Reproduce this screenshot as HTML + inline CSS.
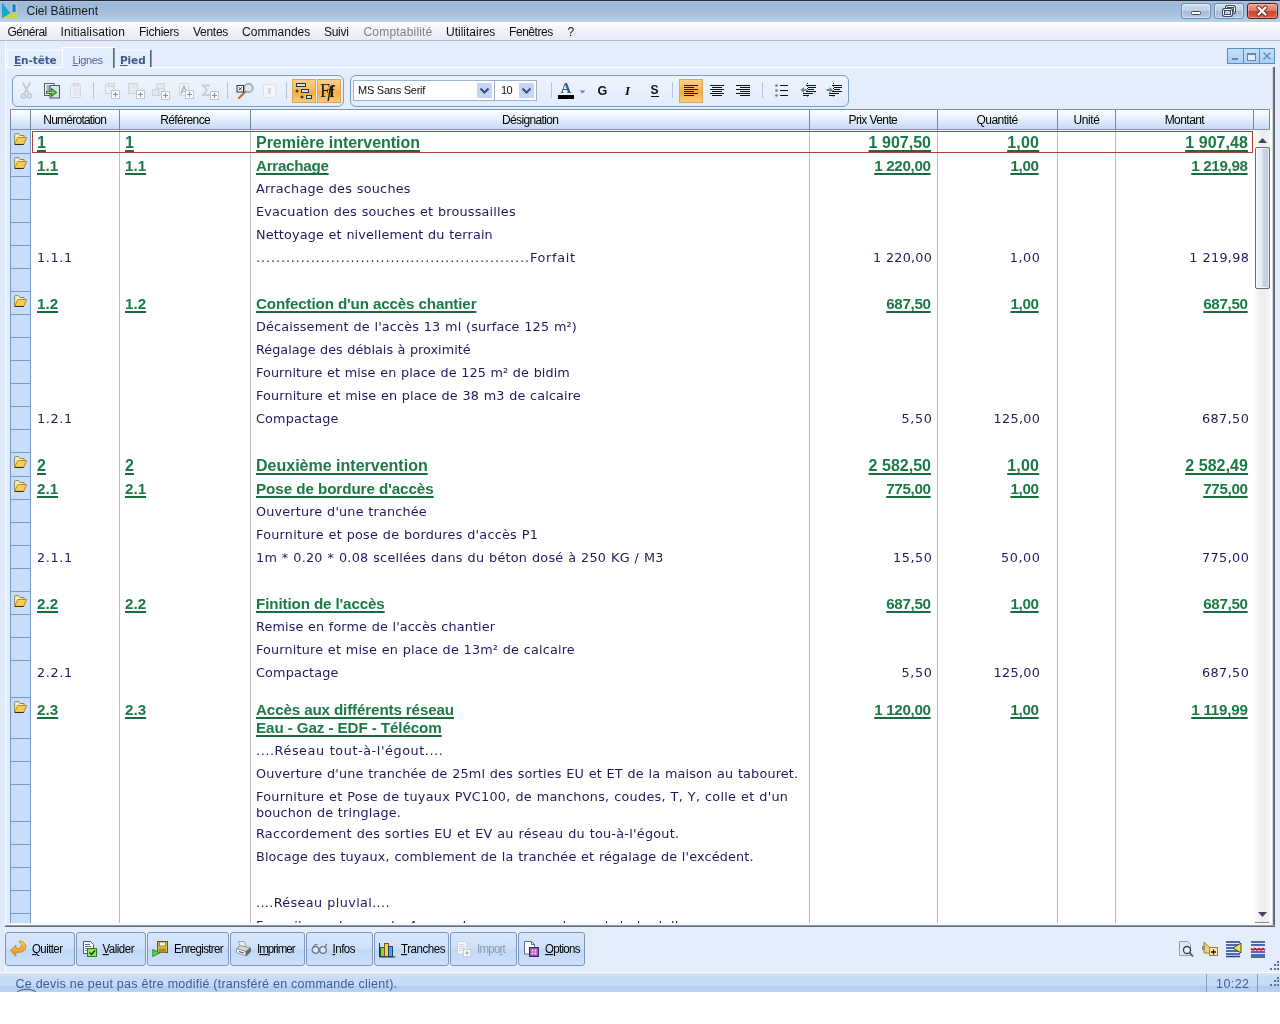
<!DOCTYPE html>
<html lang="fr">
<head>
<meta charset="utf-8">
<title>Ciel Bâtiment</title>
<style>
html,body{margin:0;padding:0;}
body{width:1280px;height:1024px;position:relative;overflow:hidden;background:#fff;font-family:"Liberation Sans",sans-serif;font-size:12px;color:#000;}
div,span,i,b,u{box-sizing:border-box;}
.abs{position:absolute;}
#app{position:absolute;left:0;top:0;width:1280px;height:1024px;will-change:transform;}
/* ---------- title bar ---------- */
#title{position:absolute;left:0;top:0;width:1280px;height:22px;background:linear-gradient(#b4c3d9 0,#9eb8d9 10%,#a3bddc 50%,#b8d0ea 100%);border-top:1px solid #1f2c42;}
#title .cap{position:absolute;left:26.500px;top:3px;font-size:12px;color:#1a1a1a;}
#title .wb{position:absolute;top:2px;height:16px;width:30px;border:1px solid #6e8bb0;border-radius:3px;background:linear-gradient(#d2deec 0,#bfcfe3 48%,#a4bad4 52%,#b7cae0 100%);box-shadow:inset 0 0 0 1px rgba(255,255,255,.45);}
#title .wb.cl{border-color:#5a1c14;background:linear-gradient(#eba38f 0,#dd7a62 48%,#c8432a 52%,#d9684c 100%);box-shadow:inset 0 0 0 1px rgba(255,255,255,.3);width:31px}
/* ---------- menu ---------- */
#menu{position:absolute;left:0;top:22px;width:1280px;height:19px;background:linear-gradient(#ffffff 0,#f1f2fa 45%,#e7e9f5 100%);border-bottom:1px solid #b5bbc8;}
#menu span{position:absolute;top:3px;font-size:12px;color:#111;white-space:nowrap;}
#menu span.dis{color:#7d8086;}
/* ---------- work area ---------- */
#work{position:absolute;left:0;top:41px;width:1280px;height:932px;background:#e3edfc;}
#lframe{position:absolute;left:0;top:41px;width:5px;height:932px;background:#dfeafb;}
/* tabs */
.tab{position:absolute;font-size:12px;white-space:nowrap;color:#3f5c8c;}
.tab.tb{font-family:"DejaVu Sans","Liberation Sans",sans-serif;font-weight:bold;font-size:10.500px;letter-spacing:-0.1px;}
/* toolbar */
.tg{position:absolute;top:75px;height:32px;border:1px solid #7a9cc6;border-radius:6px;background:linear-gradient(#edf4fd,#e1ecfb);}
.sep{position:absolute;top:82px;width:1px;height:18px;background:#b5c6dc;}
.act{position:absolute;top:79px;height:24px;border:1px solid #d9a757;background:linear-gradient(#fbd08a 0,#f9b85c 45%,#f7a93e 55%,#fbcb7c 100%);}
/* grid */
#grid{position:absolute;left:10px;top:109px;width:1260px;height:814px;background:#fff;overflow:hidden;}
#ghead{position:absolute;left:0;top:0;width:1260px;height:21px;background:linear-gradient(#fdfeff 0,#eaf2fd 40%,#d2e2f8 75%,#c6daf5 100%);border-top:1px solid #7e93ad;border-bottom:1px solid #8497b0;}
#ghead span{position:absolute;top:3px;font-size:12px;line-height:14px;color:#000;white-space:nowrap;}
#ghead i{position:absolute;top:0;width:1px;height:19px;background:#7389a5;}
#gut{position:absolute;left:0;top:0;width:21px;height:814px;background:#c8ddfa;border-left:1px solid #7799c4;border-right:1px solid #7799c4;}
.gl{position:absolute;left:1px;width:19px;height:1px;background:#7799c4;}
.vl{position:absolute;top:21px;width:1px;height:800px;background:#b6c0cc;}
.r{position:absolute;left:0;width:1260px;}
.r span{position:absolute;white-space:nowrap;}
.r u{text-decoration:none;}
.r em{font-style:normal;}
.t span{font-family:"DejaVu Sans","Liberation Sans",sans-serif;font-size:12.8px;color:#1c1c5e;top:5px;line-height:16px;word-spacing:0.45px;}
.h1 span{font-weight:bold;font-size:16px;color:#1b7a45;top:4px;line-height:18px;}
.h2 span{font-weight:bold;font-size:15.2px;color:#1b7a45;top:4px;line-height:18px;}
.h1 u,.h2 u{text-decoration:underline;text-decoration-thickness:2px;text-underline-offset:2px;text-decoration-skip-ink:none;text-decoration-color:#1b6a40;}
.c1{left:27px;}
.c2{left:115px;}
.c3{left:246px;}
.c4{right:339px;}
.c5{right:231px;}
.c6{right:22px;}
.t .c4{right:338.200px;}.t .c5{right:230.200px;}.t .c6{right:21.200px;}
.fi{position:absolute;left:4px;top:3px;width:13px;height:12px;}
.h2 .fi{top:4px;}
.fold{display:block;}
#sel{position:absolute;left:22px;top:22px;width:1221px;height:22px;border:1px solid #a9443c;}
/* scrollbar */
#sb{position:absolute;left:1244px;top:21px;width:16px;height:793px;background:linear-gradient(to right,#fff 0,#f3f3f4 25%,#ededee 55%,#f3f3f4 100%);}
/* bottom */
#bline{position:absolute;left:5px;top:925px;width:1270px;height:2px;background:linear-gradient(#9aa1ab 0,#9aa1ab 50%,#5f6874 50%,#5f6874 100%);}
.bb{position:absolute;top:932px;height:34px;border:1px solid #7d97bb;border-radius:3px;background:linear-gradient(#d8e6fb 0,#cfe0fa 48%,#c1d8f8 52%,#cde0fb 100%);font-size:12px;white-space:nowrap;}
.bb span{position:absolute;top:8.500px;color:#000;font-size:11.500px;line-height:14px;transform:scaleY(1.07);transform-origin:0 78%;}
.bb.dis span{color:#8f9bab;}
#status{position:absolute;left:0;top:973px;width:1280px;height:19px;background:linear-gradient(#dbe5f4 0,#c9dcf6 22%,#c4dbfb 66%,#b4cdec 71%,#bcd4f1 100%);}
#status span{position:absolute;top:2px;font-size:13px;color:#3d5d8f;white-space:nowrap;}
</style>
</head>
<body>
<div id="app">
<div id="title">
  <svg class="abs" style="left:0;top:-1px" width="20" height="22" viewBox="0 0 20 22"><defs><linearGradient id="ti" x1="0" x2="0" y1="0" y2="1"><stop offset="0" stop-color="#1b9fd8"/><stop offset=".7" stop-color="#14aacb"/><stop offset="1" stop-color="#2aa58a"/></linearGradient></defs><path d="M4 17.800 L10 13.200 L17.500 13 L17.500 18.200 L4 18.200z" fill="#c5d940"/><path d="M2 2.500 L2 18.200 L10.500 13.200z" fill="url(#ti)"/><rect x="12" y="3.800" width="4" height="8.700" rx="1.200" fill="#1b7ec3" stroke="#cfe8f8" stroke-width=".7"/><circle cx="13.800" cy="15.400" r="1.700" fill="#e6e24e" stroke="#b9b632" stroke-width=".6"/></svg>
  <span class="cap" style="letter-spacing:0.01px">Ciel Bâtiment</span>
  <div class="wb" style="left:1181px"><svg width="28" height="14" viewBox="0 0 28 14"><rect x="9.5" y="7.5" width="9" height="3" rx="1" fill="#fff" stroke="#3c4a5e"/></svg></div>
  <div class="wb" style="left:1214px"><svg width="28" height="14" viewBox="0 0 28 14"><rect x="11.5" y="2.500" width="8" height="6" rx="1" fill="none" stroke="#3c4a5e" stroke-width="3"/><rect x="11.500" y="2.500" width="8" height="6" rx="1" fill="none" stroke="#fff"/><rect x="8.500" y="5.500" width="8" height="6" rx="1" fill="#c3d3e6" stroke="#3c4a5e" stroke-width="3"/><rect x="8.500" y="5.500" width="8" height="6" rx="1" fill="none" stroke="#fff"/></svg></div>
  <div class="wb cl" style="left:1247px"><svg width="29" height="14" viewBox="0 0 29 14"><path d="M10.500 3.500 L17.500 10.500 M17.500 3.500 L10.500 10.500" stroke="#6a2a20" stroke-width="4.200" stroke-linecap="round"/><path d="M10.500 3.500 L17.500 10.500 M17.500 3.500 L10.500 10.500" stroke="#fff" stroke-width="2.400" stroke-linecap="round"/></svg></div>
</div>
<div id="menu">
  <span style="left:7.5px;letter-spacing:-0.484px">Général</span>
  <span style="left:60.5px;letter-spacing:0.123px">Initialisation</span>
  <span style="left:139px;letter-spacing:-0.245px">Fichiers</span>
  <span style="left:193px;letter-spacing:-0.281px">Ventes</span>
  <span style="left:242px;letter-spacing:0.034px">Commandes</span>
  <span style="left:324px;letter-spacing:-0.304px">Suivi</span>
  <span class="dis" style="left:363.5px;letter-spacing:0.191px">Comptabilité</span>
  <span style="left:446px;letter-spacing:-0.004px">Utilitaires</span>
  <span style="left:509px;letter-spacing:-0.437px">Fenêtres</span>
  <span style="left:567.5px">?</span>
</div>
<div id="work"></div>
<div id="lframe"></div>
<div class="abs" style="left:5px;top:41px;width:1px;height:932px;background:#f8fbff"></div>

<!-- tab strip -->
<div class="abs" style="left:6px;top:67px;width:1268px;height:1px;background:#fbfdff"></div>
<div class="abs" style="left:1270px;top:109px;width:3px;height:816px;background:#fff"></div>
<div class="abs" style="left:10px;top:923px;width:1263px;height:2px;background:#f4f8fd"></div>
<div class="abs" style="left:1272px;top:67px;width:1px;height:858px;background:#d3d7dd"></div>
<div class="abs" style="left:1273px;top:67px;width:1px;height:859px;background:#737986"></div>
<div class="abs" style="left:1274px;top:67px;width:1px;height:860px;background:#5b616d"></div>
<div class="abs" style="left:7px;top:50px;width:55px;height:17px;border-left:1px solid #f5f9ff;border-top:1px solid #f5f9ff"></div>
<div class="abs" style="left:62px;top:47px;width:52px;height:21px;border-left:1px solid #fbfdff;border-top:1px solid #fbfdff;background:#e3edfc"></div>
<div class="abs" style="left:113px;top:48px;width:1px;height:20px;background:#5d636d"></div><div class="abs" style="left:114px;top:48px;width:1px;height:20px;background:#8e959f"></div>
<div class="abs" style="left:150px;top:50px;width:1px;height:17px;background:#5d636d"></div><div class="abs" style="left:151px;top:50px;width:1px;height:17px;background:#8e959f"></div>
<div class="abs" style="left:115px;top:50px;width:35px;height:1px;background:#f5f9ff"></div>
<span class="tab tb" style="left:14px;top:54px"><u>E</u>n-tête</span>
<span class="tab" style="left:72.500px;top:54px;color:#4d6a98;font-size:11px;letter-spacing:-0.4px"><u>L</u>ignes</span>
<span class="tab tb" style="left:120px;top:54px"><u>P</u>ied</span>
<!-- mdi buttons -->
<div class="abs" style="left:1227px;top:48px;width:48px;height:16px;background:linear-gradient(#c2e1fb,#abd0f5);border:1px solid #5a8db8"></div>
<div class="abs" style="left:1243px;top:48px;width:1px;height:16px;background:#5a8db8"></div>
<div class="abs" style="left:1259px;top:48px;width:1px;height:16px;background:#5a8db8"></div>
<svg class="abs" style="left:1227px;top:48px" width="48" height="16" viewBox="0 0 48 16"><rect x="5" y="10" width="6" height="2" fill="#6585ad"/><rect x="20.500" y="5.500" width="8" height="7" fill="#e3edfc" stroke="#6585ad"/><rect x="20" y="5" width="9" height="2" fill="#6585ad"/><path d="M36.500 4.500 L43.500 11.500 M43.500 4.500 L36.500 11.500" stroke="#6585ad" stroke-width="1.200"/></svg>

<!-- toolbar -->
<div class="tg" style="left:12px;width:332px"></div>
<div class="tg" style="left:350px;width:499px"></div>
<!-- group 1 icons -->
<svg class="abs" style="left:12px;top:75px" width="332" height="32" viewBox="12 75 332 32">
  <!-- scissors (disabled) -->
  <g stroke="#c4c9d1" stroke-width="1.600" fill="none" stroke-linecap="round"><path d="M23 83 L29 94 M30 83 L24 94"/><circle cx="23.500" cy="96" r="2"/><circle cx="29.500" cy="96" r="2"/></g>
  <!-- copy / import -->
  <g><rect x="44.500" y="83.500" width="9.500" height="12" fill="#f4f9fd" stroke="#4c6078"/><path d="M46.500 86h5M46.500 88h4M46.500 90h4" stroke="#55687f" stroke-width="1"/><rect x="50" y="85.500" width="9.500" height="12.500" fill="#d2e6ec" stroke="#46536c"/><path d="M46.300 91.400 h5.200 v-2.900 l5.400 4 l-5.400 4 v-2.900 h-5.200z" fill="#5cc832" stroke="#1f6a10" stroke-width=".9" stroke-linejoin="round"/><path d="M47 92.300h6" stroke="#b6f09a" stroke-width=".8"/></g>
  <!-- paste (disabled) -->
  <g stroke="#d2d6dc" fill="#eef1f5"><rect x="70.500" y="84.500" width="10" height="13" rx="1"/><rect x="73.500" y="83.500" width="5" height="2.500" fill="#e2e5ea"/><path d="M73 89h7M73 91h7M73 93h7M73 95h7" stroke="#dadde3"/></g>
  <path d="M93.500 82v17" stroke="#b9c5d6"/>
  <!-- 4 -->
  <g stroke="#d2d5db" fill="#eceff3"><rect x="105.500" y="84.500" width="8" height="9"/><rect x="108.500" y="83.500" width="6" height="3" fill="#e3e6eb"/></g>
  <g><rect x="111.500" y="90.500" width="8" height="8" fill="#fafbfc" stroke="#c3c8d0"/><path d="M113 94.500h5M115.500 92v5" stroke="#8c9198" stroke-width="1"/></g>
  <!-- 5 -->
  <rect x="128.500" y="83.500" width="9" height="10" fill="#e6e9ee" stroke="#d3d7dd"/>
  <g><rect x="136.500" y="90.500" width="8" height="8" fill="#fafbfc" stroke="#c3c8d0"/><path d="M138 94.500h5M140.500 92v5" stroke="#8c9198" stroke-width="1"/></g>
  <!-- 6 -->
  <g fill="#e4e7ec" stroke="#d0d4db"><rect x="156.500" y="83.500" width="8" height="7"/><rect x="152.500" y="89.500" width="7" height="6"/><rect x="158.500" y="88.500" width="5" height="6"/></g>
  <g><rect x="161.500" y="91.500" width="8" height="8" fill="#fafbfc" stroke="#c3c8d0"/><path d="M163 95.500h5M165.500 93v5" stroke="#8c9198" stroke-width="1"/></g>
  <!-- 7 -->
  <rect x="179.500" y="83.500" width="9" height="12" fill="#f2f4f7" stroke="#d6d9df"/>
  <path d="M181 94 L184 86 L187 94 M182 91.500h4" stroke="#a9aeb6" stroke-width="1.200" fill="none"/>
  <g><rect x="185.500" y="90.500" width="8" height="8" fill="#fafbfc" stroke="#c3c8d0"/><path d="M187 94.500h5M189.500 92v5" stroke="#8c9198" stroke-width="1"/></g>
  <!-- 8 -->
  <path d="M210 85.500h-7l4 4.500l-4 5h7" stroke="#c9cdd4" stroke-width="1.800" fill="none"/>
  <g><rect x="210.500" y="91.500" width="8" height="8" fill="#fafbfc" stroke="#c3c8d0"/><path d="M212 95.500h5M214.500 93v5" stroke="#8c9198" stroke-width="1"/></g>
  <path d="M227.500 82v17" stroke="#b9c5d6"/>
  <!-- magnifier -->
  <g><path d="M239 98 L246 91" stroke="#b5773a" stroke-width="2.200" stroke-linecap="round"/><circle cx="248.500" cy="88" r="4.300" fill="#dfe9f2" stroke="#8ea0b3" stroke-width="1.400"/><rect x="237" y="85.500" width="6.500" height="6.500" fill="#fff" stroke="#333" stroke-width="1"/><path d="M238.800 87.200l3 3m0 -3l-3 3" stroke="#222" stroke-width=".9"/></g>
  <!-- disabled -->
  <rect x="263.500" y="84.500" width="12" height="13" rx="1" fill="#f3f5f8" stroke="#dfe2e7"/><rect x="268" y="88" width="3" height="6" fill="#d5d9df"/>
  <path d="M286.500 82v17" stroke="#b9c5d6"/>
</svg>
<div class="act" style="left:292px;width:24px"></div>
<div class="act" style="left:317px;width:24px"></div>
<svg class="abs" style="left:292px;top:79px" width="50" height="24" viewBox="292 79 50 24">
  <g fill="#cfe3f7" stroke="#1d3557" stroke-width="1"><rect x="296.500" y="83.500" width="9" height="3"/><rect x="301.500" y="89.500" width="7" height="3"/><rect x="306.500" y="95.500" width="5" height="3"/></g>
  <path d="M295.500 91h3M297 89.500v3M300.500 97h3M302 95.500v3" stroke="#111" stroke-width="1"/>
</svg>
<span class="abs" style="left:320px;top:80px;font-family:'Liberation Serif',serif;font-size:18px;line-height:22px;color:#1a1a1a;letter-spacing:-2.800px;white-space:nowrap">F<i style="font-size:17px">f</i><b style="font-size:17px">f</b></span>

<!-- group 2 -->
<div class="abs" style="left:353px;top:80px;width:142px;height:21px;background:#fff;border:1px solid #9db2cd"></div>
<div class="abs" style="left:494px;top:80px;width:43px;height:21px;background:#fff;border:1px solid #9db2cd"></div>
<span class="abs" style="left:358px;top:84px;font-size:11px;line-height:13px;color:#111;white-space:nowrap;letter-spacing:-0.25px">MS Sans Serif</span>
<span class="abs" style="left:501px;top:84px;font-size:11px;line-height:13px;color:#111;white-space:nowrap;letter-spacing:-0.6px">10</span>
<div class="abs" style="left:477px;top:83px;width:15px;height:15px;background:#c4d6f1;border-radius:1px"></div>
<div class="abs" style="left:519px;top:83px;width:15px;height:15px;background:#c4d6f1;border-radius:1px"></div>
<svg class="abs" style="left:477px;top:83px" width="60" height="15" viewBox="477 83 60 15"><path d="M480.500 88.500 L484.500 92.500 L488.500 88.500 M522.500 88.500 L526.500 92.500 L530.500 88.500" stroke="#384e8a" stroke-width="2" fill="none"/></svg>
<svg class="abs" style="left:545px;top:79px" width="304" height="24" viewBox="545 79 304 24">
  <path d="M551.500 82v16" stroke="#b9c5d6"/>
  <rect x="558" y="95" width="16" height="4" fill="#000"/>
  <path d="M579.500 90.500h6l-3 3z" fill="#6d86ab"/>
  <path d="M672.500 82v16" stroke="#b9c5d6"/>
  <rect x="679.500" y="79.500" width="23" height="23" fill="url(#og)" stroke="#d8a85c"/>
  <defs><linearGradient id="og" x1="0" x2="0" y1="0" y2="1"><stop offset="0" stop-color="#fbcf8a"/><stop offset=".45" stop-color="#f8b557"/><stop offset=".55" stop-color="#f7a83e"/><stop offset="1" stop-color="#fccf7e"/></linearGradient></defs>
  <path d="M684 85.500h14M684 87.500h10M684 89.500h14M684 91.500h10M684 93.500h14M684 95.500h10" stroke="#2a1408" stroke-width="1"/>
  <path d="M710 85.500h14M712 87.500h10M710 89.500h14M712 91.500h10M710 93.500h14M712 95.500h10" stroke="#111" stroke-width="1"/>
  <path d="M736 85.500h14M740 87.500h10M736 89.500h14M740 91.500h10M736 93.500h14M740 95.500h10" stroke="#111" stroke-width="1"/>
  <path d="M762.500 82v16" stroke="#b9c5d6"/>
  <g fill="#5f7fa8"><circle cx="776.500" cy="85.500" r="1.300"/><circle cx="776.500" cy="90.500" r="1.300"/><circle cx="776.500" cy="95.500" r="1.300"/></g>
  <path d="M780 85.500h8M780 90.500h8M780 95.500h8" stroke="#111" stroke-width="1"/>
  <!-- outdent -->
  <path d="M806 85.500h10M808 87.500h8M808 89.500h6M806 91.500h10M803 93.500h10M803 95.500h6" stroke="#111" stroke-width="1.200"/>
  <path d="M807.500 83v14" stroke="#111" stroke-width="1" stroke-dasharray="1 1.500"/>
  <path d="M800.500 90 l3.500 -3 v2h3v2h-3v2z" fill="#6d86ab"/>
  <!-- indent -->
  <path d="M832 85.500h10M834 87.500h8M834 89.500h6M832 91.500h10M829 93.500h10M829 95.500h6" stroke="#111" stroke-width="1.200"/>
  <path d="M833.500 83v14" stroke="#111" stroke-width="1" stroke-dasharray="1 1.500"/>
  <path d="M833 90 l-3.500 -3 v2h-3v2h3v2z" fill="#6d86ab"/>
</svg>
<span class="abs" style="left:559px;top:80px;width:14px;text-align:center;font-family:'Liberation Serif',serif;font-weight:bold;font-size:15px;line-height:16px;color:#3a5a8d">A</span>
<span class="abs" style="left:597.500px;top:84px;font-weight:bold;font-size:12.500px;line-height:14px;color:#111">G</span>
<span class="abs" style="left:625px;top:83px;font-family:'Liberation Serif',serif;font-weight:bold;font-style:italic;font-size:13px;line-height:15px;color:#111">I</span>
<span class="abs" style="left:650.500px;top:83px;font-weight:bold;font-size:12px;line-height:14px;color:#111;border-bottom:1px solid #111;height:14px">S</span>


<!-- grid -->
<div id="grid">
  <div id="gut"></div>
  <b class="gl" style="top:44px"></b>
<b class="gl" style="top:67px"></b>
<b class="gl" style="top:90px"></b>
<b class="gl" style="top:113px"></b>
<b class="gl" style="top:136px"></b>
<b class="gl" style="top:159px"></b>
<b class="gl" style="top:182px"></b>
<b class="gl" style="top:205px"></b>
<b class="gl" style="top:228px"></b>
<b class="gl" style="top:251px"></b>
<b class="gl" style="top:274px"></b>
<b class="gl" style="top:297px"></b>
<b class="gl" style="top:320px"></b>
<b class="gl" style="top:343px"></b>
<b class="gl" style="top:367px"></b>
<b class="gl" style="top:390px"></b>
<b class="gl" style="top:413px"></b>
<b class="gl" style="top:436px"></b>
<b class="gl" style="top:459px"></b>
<b class="gl" style="top:482px"></b>
<b class="gl" style="top:505px"></b>
<b class="gl" style="top:528px"></b>
<b class="gl" style="top:551px"></b>
<b class="gl" style="top:588px"></b>
<b class="gl" style="top:629px"></b>
<b class="gl" style="top:652px"></b>
<b class="gl" style="top:675px"></b>
<b class="gl" style="top:712px"></b>
<b class="gl" style="top:735px"></b>
<b class="gl" style="top:758px"></b>
<b class="gl" style="top:781px"></b>
<b class="gl" style="top:804px"></b>
  <i class="vl" style="left:109px"></i>
  <i class="vl" style="left:240px"></i>
  <i class="vl" style="left:799px"></i>
  <i class="vl" style="left:927px"></i>
  <i class="vl" style="left:1047px"></i>
  <i class="vl" style="left:1105px"></i>
<div class="r h1" style="top:21px;height:23px">
<i class="fi"><svg class="fold" viewBox="0 0 13 12" width="13" height="12"><path d="M0.600 11.300V1.200q0-.6.600-.6h3.200l1.600 1.900h4v2.200" fill="#f6f1b4" stroke="#8e8466" stroke-width="1" stroke-linejoin="round"/><path d="M0.700 11.400l2.900-6.900h9l-2.900 6.900z" fill="#f7cd49" stroke="#9a7a2c" stroke-width=".8" stroke-linejoin="round"/><path d="M0.800 11.500h8.900" stroke="#3a2a12" stroke-width="1"/></svg></i>
<span class="c1"><u>1</u></span>
<span class="c2"><u>1</u></span>
<span class="c3"><u style="letter-spacing:-0.025px">Première intervention</u></span>
<span class="c4"><u style="letter-spacing:0.017px;margin-right:-0.017px">1 907,50</u></span>
<span class="c5"><u style="letter-spacing:0.22px;margin-right:-0.22px">1,00</u></span>
<span class="c6"><u style="letter-spacing:0.074px;margin-right:-0.074px">1 907,48</u></span>
</div>
<div class="r h2" style="top:44px;height:23px">
<i class="fi"><svg class="fold" viewBox="0 0 13 12" width="13" height="12"><path d="M0.600 11.300V1.200q0-.6.600-.6h3.200l1.600 1.900h4v2.200" fill="#f6f1b4" stroke="#8e8466" stroke-width="1" stroke-linejoin="round"/><path d="M0.700 11.400l2.900-6.900h9l-2.900 6.900z" fill="#f7cd49" stroke="#9a7a2c" stroke-width=".8" stroke-linejoin="round"/><path d="M0.800 11.500h8.900" stroke="#3a2a12" stroke-width="1"/></svg></i>
<span class="c1"><u>1.1</u></span>
<span class="c2"><u>1.1</u></span>
<span class="c3"><u style="letter-spacing:-0.28px">Arrachage</u></span>
<span class="c4"><u style="letter-spacing:-0.332px;margin-right:0.332px">1 220,00</u></span>
<span class="c5"><u style="letter-spacing:-0.321px;margin-right:0.321px">1,00</u></span>
<span class="c6"><u style="letter-spacing:-0.332px;margin-right:0.332px">1 219,98</u></span>
</div>
<div class="r t" style="top:67px;height:23px">
<span class="c3"><em style="letter-spacing:0.231px">Arrachage des souches</em></span>
</div>
<div class="r t" style="top:90px;height:23px">
<span class="c3"><em style="letter-spacing:0.196px">Evacuation des souches et broussailles</em></span>
</div>
<div class="r t" style="top:113px;height:23px">
<span class="c3"><em style="letter-spacing:0.133px">Nettoyage et nivellement du terrain</em></span>
</div>
<div class="r t" style="top:136px;height:23px">
<span class="c1"><em style="letter-spacing:0.659px">1.1.1</em></span>
<span class="c3"><em style="letter-spacing:0.912px">.......................................................</em><em style="letter-spacing:0.696px">Forfait</em></span>
<span class="c4"><em style="letter-spacing:0.209px;margin-right:-0.209px">1 220,00</em></span>
<span class="c5"><em style="letter-spacing:0.5px;margin-right:-0.5px">1,00</em></span>
<span class="c6"><em style="letter-spacing:0.295px;margin-right:-0.295px">1 219,98</em></span>
</div>
<div class="r t" style="top:159px;height:23px">
</div>
<div class="r h2" style="top:182px;height:23px">
<i class="fi"><svg class="fold" viewBox="0 0 13 12" width="13" height="12"><path d="M0.600 11.300V1.200q0-.6.600-.6h3.200l1.600 1.900h4v2.200" fill="#f6f1b4" stroke="#8e8466" stroke-width="1" stroke-linejoin="round"/><path d="M0.700 11.400l2.900-6.900h9l-2.900 6.900z" fill="#f7cd49" stroke="#9a7a2c" stroke-width=".8" stroke-linejoin="round"/><path d="M0.800 11.500h8.900" stroke="#3a2a12" stroke-width="1"/></svg></i>
<span class="c1"><u>1.2</u></span>
<span class="c2"><u>1.2</u></span>
<span class="c3"><u style="letter-spacing:-0.143px">Confection d'un accès chantier</u></span>
<span class="c4"><u style="letter-spacing:-0.331px;margin-right:0.331px">687,50</u></span>
<span class="c5"><u style="letter-spacing:-0.321px;margin-right:0.321px">1,00</u></span>
<span class="c6"><u style="letter-spacing:-0.331px;margin-right:0.331px">687,50</u></span>
</div>
<div class="r t" style="top:205px;height:23px">
<span class="c3"><em style="letter-spacing:0.16px">Décaissement de l'accès 13 ml (surface 125 m²)</em></span>
</div>
<div class="r t" style="top:228px;height:23px">
<span class="c3"><em style="letter-spacing:0.005px">Régalage des déblais à proximité</em></span>
</div>
<div class="r t" style="top:251px;height:23px">
<span class="c3"><em style="letter-spacing:0.087px">Fourniture et mise en place de 125 m² de bidim</em></span>
</div>
<div class="r t" style="top:274px;height:23px">
<span class="c3"><em style="letter-spacing:0.129px">Fourniture et mise en place de 38 m3 de calcaire</em></span>
</div>
<div class="r t" style="top:297px;height:23px">
<span class="c1"><em style="letter-spacing:0.659px">1.2.1</em></span>
<span class="c3"><em style="letter-spacing:0.145px">Compactage</em></span>
<span class="c4"><em style="letter-spacing:0.6px;margin-right:-0.6px">5,50</em></span>
<span class="c5"><em style="letter-spacing:0.284px;margin-right:-0.284px">125,00</em></span>
<span class="c6"><em style="letter-spacing:0.404px;margin-right:-0.404px">687,50</em></span>
</div>
<div class="r t" style="top:320px;height:23px">
</div>
<div class="r h1" style="top:344px;height:23px">
<i class="fi"><svg class="fold" viewBox="0 0 13 12" width="13" height="12"><path d="M0.600 11.300V1.200q0-.6.600-.6h3.200l1.600 1.900h4v2.200" fill="#f6f1b4" stroke="#8e8466" stroke-width="1" stroke-linejoin="round"/><path d="M0.700 11.400l2.900-6.900h9l-2.900 6.900z" fill="#f7cd49" stroke="#9a7a2c" stroke-width=".8" stroke-linejoin="round"/><path d="M0.800 11.500h8.900" stroke="#3a2a12" stroke-width="1"/></svg></i>
<span class="c1"><u>2</u></span>
<span class="c2"><u>2</u></span>
<span class="c3"><u style="letter-spacing:0.005px">Deuxième intervention</u></span>
<span class="c4"><u style="letter-spacing:0.017px;margin-right:-0.017px">2 582,50</u></span>
<span class="c5"><u style="letter-spacing:0.22px;margin-right:-0.22px">1,00</u></span>
<span class="c6"><u style="letter-spacing:0.074px;margin-right:-0.074px">2 582,49</u></span>
</div>
<div class="r h2" style="top:367px;height:23px">
<i class="fi"><svg class="fold" viewBox="0 0 13 12" width="13" height="12"><path d="M0.600 11.300V1.200q0-.6.600-.6h3.200l1.600 1.900h4v2.200" fill="#f6f1b4" stroke="#8e8466" stroke-width="1" stroke-linejoin="round"/><path d="M0.700 11.400l2.900-6.900h9l-2.900 6.900z" fill="#f7cd49" stroke="#9a7a2c" stroke-width=".8" stroke-linejoin="round"/><path d="M0.800 11.500h8.900" stroke="#3a2a12" stroke-width="1"/></svg></i>
<span class="c1"><u>2.1</u></span>
<span class="c2"><u>2.1</u></span>
<span class="c3"><u style="letter-spacing:-0.068px">Pose de bordure d'accès</u></span>
<span class="c4"><u style="letter-spacing:-0.331px;margin-right:0.331px">775,00</u></span>
<span class="c5"><u style="letter-spacing:-0.321px;margin-right:0.321px">1,00</u></span>
<span class="c6"><u style="letter-spacing:-0.331px;margin-right:0.331px">775,00</u></span>
</div>
<div class="r t" style="top:390px;height:23px">
<span class="c3"><em style="letter-spacing:0.17px">Ouverture d'une tranchée</em></span>
</div>
<div class="r t" style="top:413px;height:23px">
<span class="c3"><em style="letter-spacing:0.227px">Fourniture et pose de bordures d'accès P1</em></span>
</div>
<div class="r t" style="top:436px;height:23px">
<span class="c1"><em style="letter-spacing:0.659px">2.1.1</em></span>
<span class="c3"><em style="letter-spacing:0.247px">1m * 0.20 * 0.08 scellées dans du béton dosé à 250 KG / M3</em></span>
<span class="c4"><em style="letter-spacing:0.515px;margin-right:-0.515px">15,50</em></span>
<span class="c5"><em style="letter-spacing:0.515px;margin-right:-0.515px">50,00</em></span>
<span class="c6"><em style="letter-spacing:0.404px;margin-right:-0.404px">775,00</em></span>
</div>
<div class="r t" style="top:459px;height:23px">
</div>
<div class="r h2" style="top:482px;height:23px">
<i class="fi"><svg class="fold" viewBox="0 0 13 12" width="13" height="12"><path d="M0.600 11.300V1.200q0-.6.600-.6h3.200l1.600 1.900h4v2.200" fill="#f6f1b4" stroke="#8e8466" stroke-width="1" stroke-linejoin="round"/><path d="M0.700 11.400l2.900-6.900h9l-2.900 6.900z" fill="#f7cd49" stroke="#9a7a2c" stroke-width=".8" stroke-linejoin="round"/><path d="M0.800 11.500h8.900" stroke="#3a2a12" stroke-width="1"/></svg></i>
<span class="c1"><u>2.2</u></span>
<span class="c2"><u>2.2</u></span>
<span class="c3"><u style="letter-spacing:-0.126px">Finition de l'accès</u></span>
<span class="c4"><u style="letter-spacing:-0.331px;margin-right:0.331px">687,50</u></span>
<span class="c5"><u style="letter-spacing:-0.321px;margin-right:0.321px">1,00</u></span>
<span class="c6"><u style="letter-spacing:-0.331px;margin-right:0.331px">687,50</u></span>
</div>
<div class="r t" style="top:505px;height:23px">
<span class="c3"><em style="letter-spacing:0.104px">Remise en forme de l'accès chantier</em></span>
</div>
<div class="r t" style="top:528px;height:23px">
<span class="c3"><em style="letter-spacing:0.165px">Fourniture et mise en place de 13m² de calcaire</em></span>
</div>
<div class="r t" style="top:551px;height:37px">
<span class="c1"><em style="letter-spacing:0.659px">2.2.1</em></span>
<span class="c3"><em style="letter-spacing:0.145px">Compactage</em></span>
<span class="c4"><em style="letter-spacing:0.6px;margin-right:-0.6px">5,50</em></span>
<span class="c5"><em style="letter-spacing:0.284px;margin-right:-0.284px">125,00</em></span>
<span class="c6"><em style="letter-spacing:0.404px;margin-right:-0.404px">687,50</em></span>
</div>
<div class="r h2" style="top:588px;height:41px">
<i class="fi"><svg class="fold" viewBox="0 0 13 12" width="13" height="12"><path d="M0.600 11.300V1.200q0-.6.600-.6h3.200l1.600 1.900h4v2.200" fill="#f6f1b4" stroke="#8e8466" stroke-width="1" stroke-linejoin="round"/><path d="M0.700 11.400l2.900-6.900h9l-2.900 6.900z" fill="#f7cd49" stroke="#9a7a2c" stroke-width=".8" stroke-linejoin="round"/><path d="M0.800 11.500h8.900" stroke="#3a2a12" stroke-width="1"/></svg></i>
<span class="c1"><u>2.3</u></span>
<span class="c2"><u>2.3</u></span>
<span class="c3"><u style="letter-spacing:-0.141px">Accès aux différents réseau</u><br><u style="letter-spacing:-0.1px">Eau - Gaz - EDF - Télécom</u></span>
<span class="c4"><u style="letter-spacing:-0.332px;margin-right:0.332px">1 120,00</u></span>
<span class="c5"><u style="letter-spacing:-0.321px;margin-right:0.321px">1,00</u></span>
<span class="c6"><u style="letter-spacing:-0.212px;margin-right:0.212px">1 119,99</u></span>
</div>
<div class="r t" style="top:629px;height:23px">
<span class="c3"><em style="letter-spacing:0.57px">....Réseau tout-à-l'égout....</em></span>
</div>
<div class="r t" style="top:652px;height:23px">
<span class="c3"><em style="letter-spacing:0.158px">Ouverture d'une tranchée de 25ml des sorties EU et ET de la maison au tabouret.</em></span>
</div>
<div class="r t" style="top:675px;height:37px">
<span class="c3"><em style="letter-spacing:0.273px">Fourniture et Pose de tuyaux PVC100, de manchons, coudes, T, Y, colle et d'un</em><br><em style="letter-spacing:0.154px">bouchon de tringlage.</em></span>
</div>
<div class="r t" style="top:712px;height:23px">
<span class="c3"><em style="letter-spacing:0.253px">Raccordement des sorties EU et EV au réseau du tou-à-l'égout.</em></span>
</div>
<div class="r t" style="top:735px;height:23px">
<span class="c3"><em style="letter-spacing:0.143px">Blocage des tuyaux, comblement de la tranchée et régalage de l'excédent.</em></span>
</div>
<div class="r t" style="top:758px;height:23px">
</div>
<div class="r t" style="top:781px;height:23px">
<span class="c3"><em style="letter-spacing:0.354px">....Réseau pluvial....</em></span>
</div>
<div class="r t" style="top:804px;height:23px">
<span class="c3"><em style="letter-spacing:0.428px">Fourniture et pose de 4 regards avec raccordement de la dalle</em></span>
</div>
  <div id="sel"></div>
  <div id="ghead">
    <span style="left:33.25px;letter-spacing:-0.759px">Numérotation</span>
    <span style="left:150.25px;letter-spacing:-0.609px">Référence</span>
    <span style="left:492.00px;letter-spacing:-0.637px">Désignation</span>
    <span style="left:838.50px;letter-spacing:-0.6px">Prix Vente</span>
    <span style="left:966.60px;letter-spacing:-0.554px">Quantité</span>
    <span style="left:1063.50px;letter-spacing:-0.404px">Unité</span>
    <span style="left:1154.70px;letter-spacing:-0.56px">Montant</span>
    <i style="left:0"></i><i style="left:20px"></i><i style="left:109px"></i><i style="left:240px"></i><i style="left:799px"></i><i style="left:927px"></i><i style="left:1047px"></i><i style="left:1105px"></i><i style="left:1243px"></i><i style="left:1259px"></i>
  </div>
  <div id="sb">
    <svg class="abs" style="left:0;top:0" width="16" height="793" viewBox="0 0 16 793"><path d="M4 13 L8.500 8 L13 13z" fill="#3f4657"/><rect x="1.500" y="17.500" width="14" height="141" rx="1.500" fill="url(#tg)" stroke="#666c78"/><rect x="2.500" y="18.500" width="12" height="139" rx="1" fill="none" stroke="#fff" stroke-opacity=".7"/><defs><linearGradient id="tg" x1="0" x2="1" y1="0" y2="0"><stop offset="0" stop-color="#f0f3f9"/><stop offset=".45" stop-color="#e6eaf3"/><stop offset=".55" stop-color="#c9d4e3"/><stop offset="1" stop-color="#bccadb"/></linearGradient></defs><path d="M4 782 L8.500 787 L13 782z" fill="#3f4657"/><rect x="1" y="792" width="14" height="1" fill="#7d8a98"/></svg>
  </div>
</div>
<div id="bline"></div>

<!-- bottom buttons -->
<div class="bb" style="left:5px;width:70px"><svg class="abs" style="left:4px;top:7px" width="18" height="18" viewBox="0 0 18 18"><defs><linearGradient id="qa" x1="0" x2="0" y1="0" y2="1"><stop offset="0" stop-color="#fcd34a"/><stop offset=".55" stop-color="#fba92c"/><stop offset="1" stop-color="#f28a1c"/></linearGradient></defs><path d="M0.600 10.500 L5.800 5 L5.800 8.300 C9 8.600 11.500 7.800 11.500 5.500 C11.500 3.800 10.300 2.600 8.800 1.800 L10.800 0.800 C14 2 15.800 4.400 15.800 7 C15.800 11 11.500 12.800 5.800 12.600 L5.800 16.300 Z" fill="url(#qa)" stroke="#b8862a" stroke-width=".8" stroke-linejoin="round"/></svg><span style="left:26px;letter-spacing:-0.586px"><u>Q</u>uitter</span></div>
<div class="bb" style="left:76px;width:70px"><svg class="abs" style="left:5px;top:8px" width="16" height="16" viewBox="0 0 16 16"><path d="M1.500 .5h7l3 3v9h-10z" fill="#fff" stroke="#3b5a8a"/><path d="M3 3.500h5M3 5.500h6M3 7.500h6M3 9.500h3" stroke="#5b7aa8"/><rect x="5.500" y="7.500" width="9" height="8" fill="#9be05a" stroke="#2e7a22"/><path d="M7.500 11.500l2 2l3.500-4" stroke="#114a12" stroke-width="1.500" fill="none"/></svg><span style="left:25.500px;letter-spacing:-0.492px"><u>V</u>alider</span></div>
<div class="bb" style="left:147px;width:82px"><svg class="abs" style="left:4px;top:8px" width="17" height="16" viewBox="0 0 17 16"><rect x="5.500" y=".5" width="10" height="11" fill="#d9bf4c" stroke="#6a5414"/><rect x="7.500" y="1" width="6" height="4" fill="#f7f1d2" stroke="#6a5414" stroke-width=".6"/><rect x="7" y="7.500" width="7" height="4" fill="#a88f2e"/><path d="M.8 8.500v7l7-3.500z" fill="#57d63a" stroke="#1f8a22" stroke-width=".9"/></svg><span style="left:26px;letter-spacing:-0.675px">Enregistrer</span></div>
<div class="bb" style="left:230px;width:75px"><svg class="abs" style="left:5px;top:8px" width="16" height="16" viewBox="0 0 16 16"><path d="M2.500 .5h6l1.500 5.500h-6z" fill="#e6f0fb" stroke="#8ea3bd" stroke-width=".9"/><path d="M0.500 7.500l4.500-3l9.500 2.500l-4.500 3.500z" fill="#dcd6ca" stroke="#8b8b8b" stroke-width=".8"/><path d="M0.500 7.500l9.500 3v4.500l-9.500-3.500z" fill="#f8f8f6" stroke="#8b8b8b" stroke-width=".8"/><path d="M10 10.500l4.500-3.500v4l-4.500 4z" fill="#6c6c6c" stroke="#555" stroke-width=".6"/><path d="M3 10.500l5 1.700" stroke="#444" stroke-width="1"/></svg><span style="left:26px;letter-spacing:-0.982px">I<u>m</u>primer</span></div>
<div class="bb" style="left:306px;width:67px"><svg class="abs" style="left:4px;top:10px" width="17" height="12" viewBox="0 0 17 12"><g fill="#dfe8f3" stroke="#66788f" stroke-width="1.300"><circle cx="4.500" cy="7" r="3.300"/><circle cx="12" cy="7" r="3.300"/></g><path d="M2.500 4.500 C3 1.500 5.500 1 6.500 2 M14 4.500 C14.500 2 15.500 1.500 16 1" stroke="#66788f" stroke-width="1.200" fill="none"/></svg><span style="left:25.500px;letter-spacing:-0.484px"><u>I</u>nfos</span></div>
<div class="bb" style="left:374px;width:75px"><svg class="abs" style="left:4px;top:9px" width="17" height="16" viewBox="0 0 17 16"><rect x="1.500" y="5.500" width="4" height="9" fill="#8ed24a" stroke="#2b5a2b"/><rect x="5.500" y="1.500" width="4" height="13" fill="#f5d24a" stroke="#7a5a14"/><rect x="9.500" y="4.500" width="4" height="10" fill="#5aa0e0" stroke="#1f3f7a"/><path d="M.5 1v14h16" stroke="#1f3557" fill="none"/></svg><span style="left:26px;letter-spacing:-0.431px"><u>T</u>ranches</span></div>
<div class="bb dis" style="left:450px;width:67px"><svg class="abs" style="left:6px;top:8px" width="15" height="16" viewBox="0 0 15 16"><path d="M.5 .5h7l2.500 2.500v10h-9.500z" fill="#f5f6f8" stroke="#cfd4db"/><path d="M2 3.500h5M2 5.500h6M2 7.500h6M2 9.500h4" stroke="#d3d7dd"/><rect x="6.500" y="8.500" width="7" height="7" fill="#fcfcfd" stroke="#c9ced6"/><path d="M8 12h4M10 10v4" stroke="#9aa0a8"/></svg><span style="left:26px;letter-spacing:-0.759px">Impo<u>r</u>t</span></div>
<div class="bb" style="left:518px;width:67px"><svg class="abs" style="left:5px;top:8px" width="16" height="16" viewBox="0 0 16 16"><path d="M.5 .5h7l3 3v9.500h-10z" fill="#fff" stroke="#5b6f8f"/><path d="M7.500 .5v3h3" fill="none" stroke="#5b6f8f"/><rect x="5.500" y="6.500" width="9" height="9" fill="#9a4fb5" stroke="#4a1f66"/><path d="M7.500 8.500h2v2h-2zM10.500 8.500h2v2h-2zM7.500 11.500h2v2h-2zM10.500 11.500h2v2h-2z" fill="#f1d9fa"/></svg><span style="left:26px;letter-spacing:-0.69px"><u>O</u>ptions</span></div>
<!-- right icons -->
<svg class="abs" style="left:1176px;top:938px" width="104" height="36" viewBox="1176 938 104 36">
  <path d="M1179.500 941.500h8l3 3v11h-11z" fill="#dfe8f5" stroke="#8fa3c0"/><circle cx="1187" cy="950" r="3.500" fill="#f4f8fc" stroke="#333c4a" stroke-width="1.300"/><path d="M1189.500 952.500l3.500 4" stroke="#555" stroke-width="1.800"/>
  <path d="M1204 942l6 6v5h-6z" fill="#f3d37a" stroke="#a87b26"/><rect x="1202" y="946" width="3" height="4" fill="#8e8e8e"/><rect x="1209.500" y="947.500" width="8" height="8" fill="#fbe7ad" stroke="#a87b26"/><path d="M1211 952h5M1213.500 949.500v5" stroke="#111" stroke-width="1.300"/>
  <path d="M1226 942h14M1226 945h14M1226 948h14M1226 951h14M1226 954h14M1226 956.500h14" stroke="#1f3f9a" stroke-width="1.500"/><path d="M1241 943l-8 5l8 5z" fill="#f2e24a" stroke="#222" stroke-width=".8"/>
  <path d="M1251 942h14M1251 945h14M1251 952h14M1251 955h14M1251 957h14" stroke="#1f3f9a" stroke-width="1.500"/><path d="M1251 948.500l2 1.500l2-1.500l2 1.500l2-1.500l2 1.500l2-1.500l2 1.500" stroke="#d4142a" stroke-width="1.600" fill="none"/>
  <g fill="#5f7391"><rect x="1277" y="961" width="2" height="2"/><rect x="1274" y="964" width="2" height="2"/><rect x="1277" y="964" width="2" height="2"/><rect x="1270" y="968" width="2" height="2"/><rect x="1274" y="968" width="2" height="2"/><rect x="1277" y="968" width="2" height="2"/></g>
</svg>


<div class="abs" style="left:0;top:972px;width:1280px;height:1px;background:#f7faff"></div>
<div id="status">
  <span style="left:15.500px;top:4px;font-size:12.500px;line-height:15px;letter-spacing:0.24px">Ce devis ne peut pas être modifié (transféré en commande client).</span>
  <span style="left:1216px;top:4px;font-size:12.500px;line-height:15px;letter-spacing:0.43px">10:22</span>
  <i class="abs" style="left:1206px;top:1px;width:1px;height:18px;background:#86a0c4"></i>
  <i class="abs" style="left:1257px;top:1px;width:1px;height:18px;background:#86a0c4"></i>
  <svg class="abs" style="left:1266px;top:3px" width="14" height="14" viewBox="0 0 14 14"><g fill="#5f7391"><rect x="11" y="1" width="2" height="2"/><rect x="8" y="4" width="2" height="2"/><rect x="11" y="4" width="2" height="2"/><rect x="4" y="8" width="2" height="2"/><rect x="8" y="8" width="2" height="2"/><rect x="11" y="8" width="2" height="2"/></g></svg>
</div>
<svg class="abs" style="left:16px;top:988px" width="22" height="4" viewBox="0 0 22 4"><path d="M1 4 C5 0.500 16 0.500 20 4" fill="none" stroke="#4a5568" stroke-width="1"/></svg>
</div>
</body>
</html>
